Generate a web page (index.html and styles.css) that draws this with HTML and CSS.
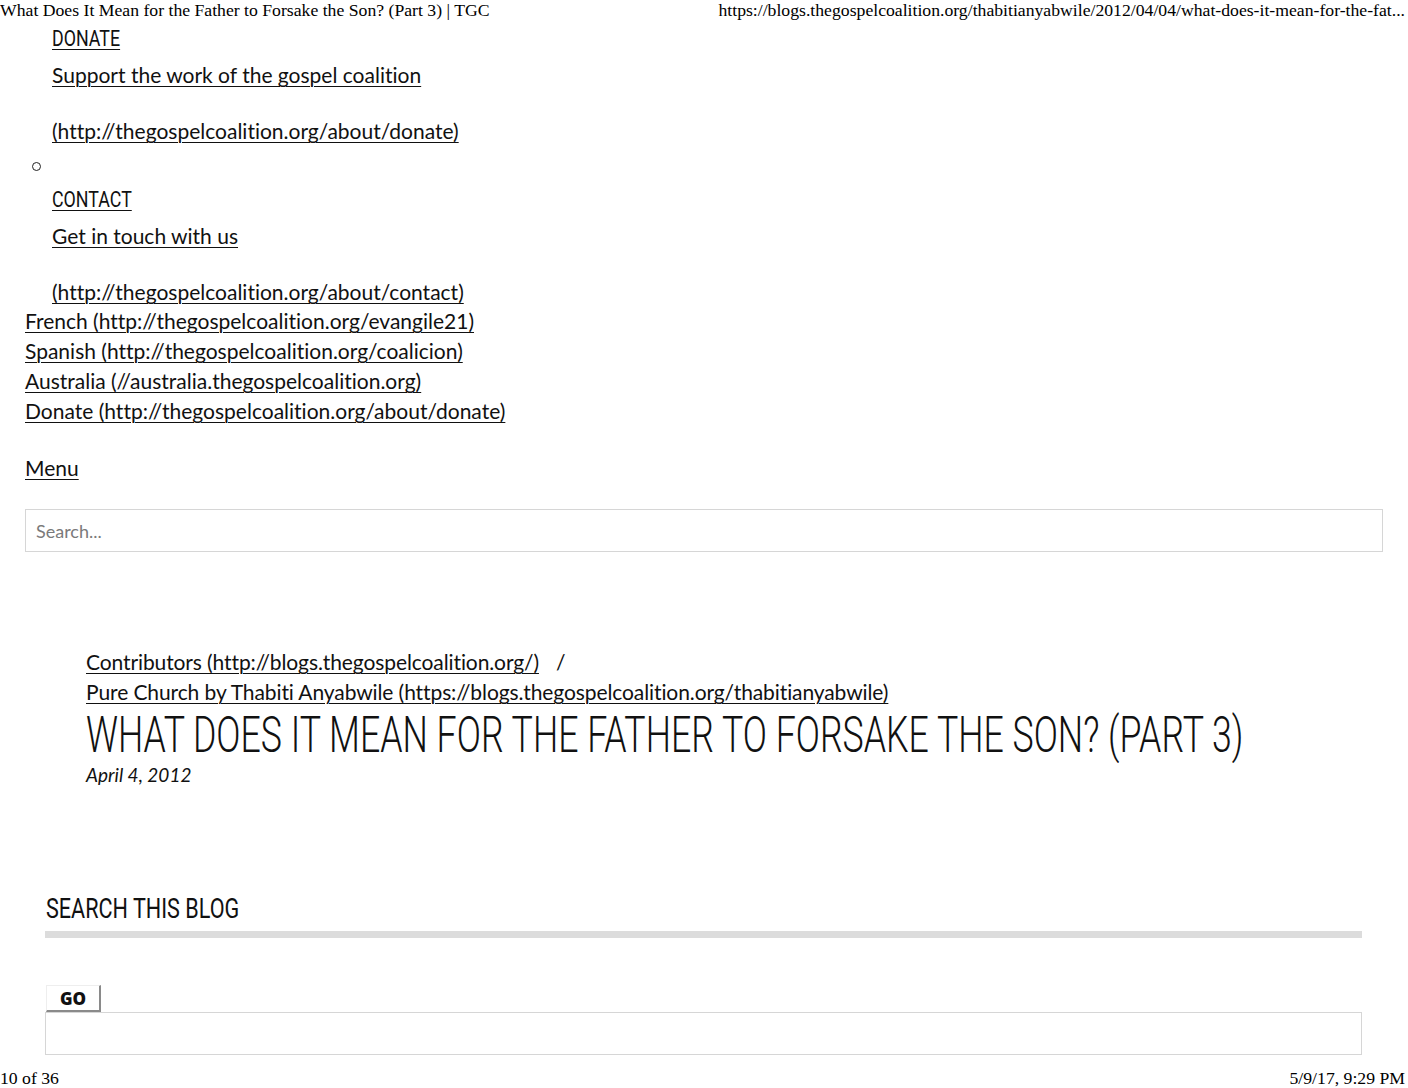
FILE: index.html
```html
<!DOCTYPE html>
<html>
<head>
<meta charset="utf-8">
<title>What Does It Mean for the Father to Forsake the Son? (Part 3) | TGC</title>
<link rel="stylesheet" href="styles.css">
</head>
<body>

<div class="print-head">
	<span>What Does It Mean for the Father to Forsake the Son? (Part 3) | TGC</span>
	<span>https://blogs.thegospelcoalition.org/thabitianyabwile/2012/04/04/what-does-it-mean-for-the-fat...</span>
</div>

<ul class="sub-menu">
	<li>
		<a class="menu-title" href="#"><span class="cond">DONATE</span></a>
		<a class="menu-desc" href="#">Support the work of the gospel coalition<br><br>(http://thegospelcoalition.org/about/donate)</a>
	</li>
	<li>
		<div class="blank"><span class="bullet"></span></div>
		<a class="menu-title" href="#"><span class="cond">CONTACT</span></a>
		<a class="menu-desc" href="#">Get in touch with us<br><br>(http://thegospelcoalition.org/about/contact)</a>
	</li>
</ul>

<ul class="lang-menu">
	<li><a href="#">French (http://thegospelcoalition.org/evangile21)</a></li>
	<li><a href="#">Spanish (http://thegospelcoalition.org/coalicion)</a></li>
	<li><a href="#">Australia (//australia.thegospelcoalition.org)</a></li>
	<li><a href="#">Donate (http://thegospelcoalition.org/about/donate)</a></li>
</ul>

<div class="menu-link"><a href="#">Menu</a></div>

<input class="site-search" type="text" placeholder="Search...">

<div class="post-head">
	<div class="crumbs">
		<a href="#">Contributors (http://blogs.thegospelcoalition.org/)</a><span class="sep">/</span><br>
		<a href="#">Pure Church by Thabiti Anyabwile (https://blogs.thegospelcoalition.org/thabitianyabwile)</a>
	</div>
	<h1 class="post-title"><span class="cond">WHAT DOES IT MEAN FOR THE FATHER TO FORSAKE THE SON? (PART 3)</span></h1>
	<div class="post-date">April 4, 2012</div>
</div>

<div class="widget">
	<h3 class="widget-title"><span class="cond">SEARCH THIS BLOG</span></h3>
	<div class="widget-bar"></div>
	<button class="go" type="button">GO</button>
	<input class="blog-search" type="text">
</div>

<div class="print-foot">
	<span>10 of 36</span>
	<span>5/9/17, 9:29 PM</span>
</div>

</body>
</html>
```

FILE: styles.css
```css
html,
body {
	overflow-x: hidden;
}

body {
	margin: 0;
	font-family: Lato, "Open Sans", sans-serif;
	font-size: 21px;
	font-variant-ligatures: none;
	color: #111;
}

a {
	color: #111;
	text-decoration: underline;
	text-underline-offset: 3px;
	text-decoration-thickness: 1px;
}

.cond {
	display: inline-block;
	vertical-align: top;
	font-family: Roboto, sans-serif;
	font-weight: 300;
	transform-origin: left center;
	white-space: nowrap;
}

.print-head,
.print-foot {
	display: flex;
	justify-content: space-between;
	font-family: "Liberation Serif", serif;
	font-size: 17.7px;
	line-height: 20px;
	height: 20px;
	padding-right: 3px;
	color: #000;
}

.print-foot {
	margin-top: 14px;
	line-height: 18px;
	height: 18px;
}

.sub-menu {
	margin: 0;
	padding-left: 52px;
	list-style: none;
}

.sub-menu .blank {
	height: 28px;
	margin-top: 7px;
	display: flex;
	align-items: center;
}

.bullet {
	width: 7px;
	height: 7px;
	margin-left: -20px;
	border: 1.4px solid #222;
	border-radius: 50%;
}

.menu-title {
	display: block;
	line-height: 38px;
	font-size: 22px;
	width: max-content;
}

.sub-menu .blank + .menu-title {
	margin-top: 1px;
}

.menu-title .cond {
	transform: scaleX(0.81);
	font-weight: 400;
	text-decoration: underline;
	text-underline-offset: 3px;
	text-decoration-thickness: 1px;
}

.menu-desc {
	display: block;
	margin-top: 3px;
	line-height: 28px;
	width: max-content;
}

.lang-menu {
	margin: 0;
	padding-left: 25px;
	list-style: none;
	line-height: 30px;
}

.menu-link {
	margin: 27px 0 0 25px;
	line-height: 30px;
}

.site-search {
	display: block;
	box-sizing: border-box;
	margin: 26px 25px 0;
	width: calc(100% - 50px);
	height: 43px;
	border: 1px solid #d6d6d6;
	padding: 0 10px;
	font-family: Lato, "Open Sans", sans-serif;
	font-size: 18px;
	color: #111;
}

.site-search::placeholder {
	color: #7a7a7a;
}

.post-head {
	margin: 95px 0 0 86px;
}

.crumbs {
	line-height: 30px;
	font-size: 21px;
	letter-spacing: -0.1px;
}

.crumbs .sep {
	margin-left: 17px;
}

.post-title {
	margin: 0;
	line-height: 56px;
	font-size: 50px;
	font-weight: 300;
	overflow: hidden;
}

.post-title .cond {
	transform: scaleX(0.714);
}

.post-date {
	line-height: 24px;
	font-size: 19px;
	font-style: italic;
}

.widget {
	margin: 105px 46px 0 45px;
}

.widget-title {
	margin: 0 0 0 1px;
	line-height: 34px;
	font-size: 27px;
	font-weight: 300;
	overflow: hidden;
}

.widget-title .cond {
	transform: scaleX(0.8);
	font-weight: 400;
}

.widget-bar {
	margin-top: 5px;
	height: 7px;
	background: #dcdcdc;
}

.go {
	display: block;
	margin: 47px 0 0 1px;
	width: 55px;
	height: 27px;
	padding: 0;
	background: #fff;
	border: none;
	border-top: 1px solid #eee;
	border-left: 1px solid #eee;
	border-right: 2px solid #8a8a8a;
	border-bottom: 2px solid #8a8a8a;
	font-family: "Open Sans", Lato, sans-serif;
	font-weight: 800;
	font-size: 17px;
	color: #111;
}

.blog-search {
	display: block;
	box-sizing: border-box;
	width: 100%;
	height: 43px;
	margin: 0;
	border: 1px solid #d6d6d6;
}
```
